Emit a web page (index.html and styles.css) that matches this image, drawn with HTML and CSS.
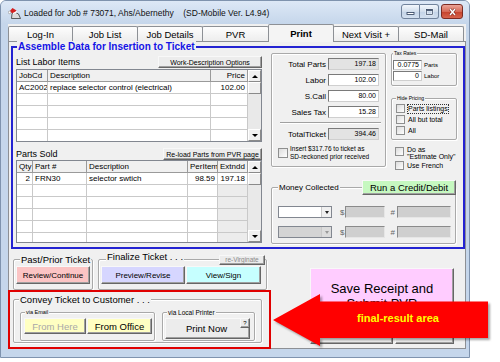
FILE: index.html
```html
<!DOCTYPE html>
<html lang="en">
<head>
<meta charset="utf-8">
<title>SD-Mobile Print</title>
<link rel="stylesheet" href="styles.css">
</head>
<body>
<div class="window">
  <div class="titlebar">
    <svg class="app-icon" viewBox="0 0 13 12" aria-hidden="true">
      <path d="M4 6.5 Q7.5 4 10.5 7 L12.5 11.5 L3.5 11.5 Z" fill="#dcdcdc" stroke="#3a3a3a" stroke-width="0.8"/>
      <path d="M1 5 L4.5 1 L8.5 3.5 L6 6.5 Z" fill="#d42020"/>
      <circle cx="1.6" cy="5.4" r="1.3" fill="#fff" stroke="#777" stroke-width="0.5"/>
      <path d="M5 6.6 L9 4.6" stroke="#fff" stroke-width="1.2"/>
    </svg>
    <span class="title">Loaded for Job # 73071, Ahs/Abernethy    (SD-Mobile Ver. L4.94)</span>
    <div class="wctrls">
      <span class="wbtn wmin"><svg viewBox="0 0 9 8"><rect x="1" y="4.5" width="7" height="2" fill="#fff" stroke="#2c3e5a" stroke-width="0.8"/></svg></span>
      <span class="wbtn wmax"><svg viewBox="0 0 9 8"><rect x="1.5" y="1.5" width="6" height="5" fill="none" stroke="#fff" stroke-width="1.6"/><rect x="1.5" y="1.5" width="6" height="5" fill="none" stroke="#2c3e5a" stroke-width="0.7"/><rect x="1.5" y="1.5" width="6" height="1.3" fill="#2c3e5a"/></svg></span>
      <span class="wbtn wclose"><svg viewBox="0 0 9 8"><path d="M2 1 L7 7 M7 1 L2 7" stroke="#6a1d14" stroke-width="2.6"/><path d="M2 1 L7 7 M7 1 L2 7" stroke="#fff" stroke-width="1.5"/></svg></span>
    </div>
  </div>

  <div class="client">
    <div class="tabs">
      <div class="tab t65">Log-In</div>
      <div class="tab">Job List</div>
      <div class="tab">Job Details</div>
      <div class="tab t67">PVR</div>
      <div class="tab sel">Print</div>
      <div class="tab">Next Visit +</div>
      <div class="tab">SD-Mail</div>
    </div>

    <div class="page">
      <div class="assemble">
        <div class="assemble-title">Assemble Data for Insertion to Ticket</div>
        <div class="assemble-body">
          <div class="left-col">
            <div class="sec-head labor-head">
              <span class="sec-label">List Labor Items</span>
              <button class="btn grey opt-btn">Work-Description Options</button>
            </div>
            <div class="grid labor">
              <div class="cells labor-cols">
                <div class="hd">JobCd</div><div class="hd">Description</div><div class="hd r">Price</div>
                <div>AC2002</div><div>replace selector control (electrical)</div><div class="r">102.00</div>
                <div></div><div></div><div></div>
                <div></div><div></div><div></div>
                <div></div><div></div><div></div>
                <div></div><div></div><div></div>
              </div>
              <div class="vscroll">
                <div class="sbtn up"></div>
                <div class="sbtn thumb"></div>
                <div class="track"></div>
                <div class="sbtn down"></div>
              </div>
            </div>

            <div class="sec-head parts-head">
              <span class="sec-label">Parts Sold</span>
              <button class="btn grey reload-btn">Re-load Parts from PVR page</button>
            </div>
            <div class="grid parts">
              <div class="cells parts-cols">
                <div class="hd">Qty</div><div class="hd">Part #</div><div class="hd">Description</div><div class="hd">PerItem</div><div class="hd">Extndd</div>
                <div class="r">2</div><div>FRN30</div><div>selector swtich</div><div class="r">98.59</div><div class="r">197.18</div>
                <div></div><div></div><div></div><div></div><div class="g"></div>
                <div></div><div></div><div></div><div></div><div class="g"></div>
                <div></div><div></div><div></div><div></div><div class="g"></div>
                <div></div><div></div><div></div><div></div><div class="g"></div>
                <div></div><div></div><div></div><div></div><div class="g"></div>
              </div>
              <div class="vscroll">
                <div class="sbtn up"></div>
                <div class="sbtn thumb"></div>
                <div class="track"></div>
                <div class="sbtn down"></div>
              </div>
            </div>
          </div>

          <div class="right-area">
            <div class="right-top">
              <div class="gbox totals">
                <div class="trow"><span class="tlabel">Total Parts</span><span class="tbox dis">197.18</span></div>
                <div class="trow"><span class="tlabel">Labor</span><span class="tbox">102.00</span></div>
                <div class="trow"><span class="tlabel">S.Call</span><span class="tbox">80.00</span></div>
                <div class="trow"><span class="tlabel">Sales Tax</span><span class="tbox">15.28</span></div>
                <div class="sep"></div>
                <div class="trow"><span class="tlabel">TotalTicket</span><span class="tbox dis">394.46</span></div>
                <div class="insert-row">
                  <span class="chk big"></span>
                  <span class="insert-lbl">Insert $317.76 to ticket as<br>SD-reckoned prior received</span>
                </div>
              </div>

              <div class="side">
                <div class="gbox taxbox">
                  <span class="gtitle tiny">Tax Rates</span>
                  <div class="taxrows">
                    <div class="taxrow"><span class="taxin">0.0775</span><span class="taxlbl">Parts</span></div>
                    <div class="taxrow"><span class="taxin">0</span><span class="taxlbl">Labor</span></div>
                  </div>
                </div>
                <div class="gbox hidebox">
                  <span class="gtitle tiny">Hide Pricing</span>
                  <div class="chkrow"><span class="chk"></span><span class="chklbl focus">Parts listings</span></div>
                  <div class="chkrow"><span class="chk"></span><span class="chklbl">All but total</span></div>
                  <div class="chkrow"><span class="chk"></span><span class="chklbl">All</span></div>
                </div>
                <div class="estrow"><span class="chk"></span><span class="chklbl two">Do as<br>"Estimate Only"</span></div>
                <div class="chkrow frrow"><span class="chk"></span><span class="chklbl">Use French</span></div>
              </div>
            </div>

            <div class="gbox money">
              <div class="ghead">
                <span class="gtitle money-title">Money Collected</span>
                <span class="spacer"></span>
                <button class="btn green">Run a Credit/Debit</button>
              </div>
              <div class="mrow first">
                <span class="combo"><span class="dd"></span></span>
                <span class="cur dollar">$</span><span class="minput m40"></span>
                <span class="cur hash">#</span><span class="minput m54"></span>
              </div>
              <div class="mrow second">
                <span class="combo dis"><span class="dd"></span></span>
                <span class="cur dollar">$</span><span class="minput m40"></span>
                <span class="cur hash">#</span><span class="minput m54"></span>
              </div>
            </div>
          </div>
        </div>
      </div>

      <div class="lower">
        <div class="lower-left">
          <div class="lower-row">
            <div class="gbox past">
              <span class="gtitle mid">Past/Prior Ticket</span>
              <button class="btn pink review">Review/Continue</button>
            </div>
            <div class="gbox finalize">
              <div class="ghead fin-head">
                <span class="gtitle mid fin-title">Finalize Ticket . . .</span>
                <span class="spacer"></span>
                <button class="btn grey revirg">re-Virginate</button>
              </div>
              <div class="fin-btns">
                <button class="btn lav preview">Preview/Revise</button>
                <button class="btn cyan viewsign">View/Sign</button>
              </div>
            </div>
          </div>
          <div class="gbox convey">
            <span class="gtitle mid">Convey Ticket to Customer . . .</span>
            <div class="convey-row">
              <div class="gbox via email">
                <span class="gtitle via-title">via Email</span>
                <div class="email-btns">
                  <button class="btn yellow here">From Here</button>
                  <button class="btn yellow office">From Office</button>
                </div>
              </div>
              <div class="gbox via printer">
                <span class="gtitle via-title lp">via Local Printer</span>
                <div class="print-wrap">
                  <button class="btn grey printnow">Print Now</button>
                  <button class="btn grey qmark">?</button>
                </div>
              </div>
            </div>
          </div>
        </div>
        <div class="lower-right">
          <button class="btn save">Save Receipt and<br>Submit PVR</button>
          <div class="save-row">
            <button class="btn grey sub1"></button>
            <button class="btn grey sub2"></button>
          </div>
        </div>
      </div>
    </div>
  </div>

  <div class="red-frame"></div>
  <svg class="arrow" viewBox="270 291 222 60" aria-hidden="false">
    <polygon class="arrow-shape" points="273,320 320,294 320,301.5 488,301.5 488,338 320,338 320,346" fill="#ff0000"/>
    <text x="398" y="322" text-anchor="middle" class="arrow-text">final-result area</text>
  </svg>
</div>
</body>
</html>
```

FILE: styles.css
```css
* { box-sizing: border-box; }
html, body { margin: 0; padding: 0; background: #fff; }
body { font-family: "Liberation Sans", Arial, sans-serif; color: #000; width: 500px; height: 362px; overflow: hidden; }
button { font-family: inherit; margin: 0; padding: 0; color: #000; }

/* window frame */
.window { position: relative; width: 470px; height: 358px; border: 1px solid #7f93ae; border-radius: 6px 6px 0 0; background: #c5d6eb; display: flex; flex-direction: column; }
.titlebar { height: 23px; flex: none; display: flex; align-items: center; padding-left: 7px; background: linear-gradient(#dde8f6, #c5d6eb); border-radius: 5px 5px 0 0; }
.app-icon { width: 13px; height: 12px; flex: none; }
.title { margin-left: 3px; font-size: 8.5px; white-space: pre; color: #111; }
.wctrls { margin-left: auto; margin-right: 6px; align-self: flex-start; margin-top: 3px; display: flex; }
.wbtn { height: 15px; width: 19px; border: 1px solid #71839c; background: linear-gradient(#f3f7fc, #d2deec 50%, #c3d3e7 51%, #d3e0ef); display: flex; align-items: center; justify-content: center; }
.wbtn svg { width: 9px; height: 8px; }
.wmin { border-radius: 3px 0 0 3px; }
.wmax { border-left: none; border-radius: 0 3px 3px 0; }
.wclose { width: 22px; margin-left: 2px; border-color: #7d2b22; border-radius: 3px; background: linear-gradient(#eba497, #d66a57 50%, #c4412b 51%, #d7634c); }

/* client + tabs */
.client { flex: 1; margin: 0 3px 8px 7px; background: #f0f0f0; display: flex; flex-direction: column; }
.tabs { height: 17px; flex: none; display: flex; align-items: flex-end; position: relative; z-index: 1; }
.tab { width: 66px; height: 15px; flex: none; border: 1px solid #8d9095; border-bottom: none; margin-right: -1px; background: linear-gradient(#fdfdfd, #ededed); font-size: 9.5px; display: flex; align-items: center; justify-content: center; border-radius: 2px 2px 0 0; }
.tab.t65 { width: 65px; }
.tab.t67 { width: 67px; }
.tab.sel { height: 18px; margin-bottom: -1px; background: #f4f4f4; font-weight: bold; }
.page { flex: 1; border: 1px solid #8d9095; background: #f0f0f0; display: flex; flex-direction: column; }

/* big blue group */
.assemble { margin: 4px 0 0 2px; width: 454px; height: 203px; flex: none; border: 2px solid #2323d2; }
.assemble-title { width: fit-content; margin: -7px 0 -5px 4px; padding: 0 1px; background: #f0f0f0; color: #1414e6; font-weight: bold; font-size: 10px; line-height: 12px; }
.assemble-body { display: flex; padding-left: 3px; gap: 9px; }

.left-col { width: 246px; flex: none; display: flex; flex-direction: column; }
.sec-head { height: 12px; display: flex; justify-content: space-between; align-items: center; }
.labor-head { margin-top: 8px; }
.parts-head { margin-top: 6px; }
.sec-label { font-size: 9px; }
.opt-btn { width: 104px; height: 12px; font-size: 7px; }
.reload-btn { width: 99px; height: 12px; font-size: 7px; }

.grid { display: flex; border: 1px solid #828790; background: #fff; overflow: hidden; }
.labor { margin-top: 1px; height: 73px; }
.parts { height: 83px; }
.cells { flex: 1; display: grid; grid-auto-rows: 12px; align-content: start; overflow: hidden; }
.labor-cols { grid-template-columns: 31px 163px 37px; }
.parts-cols { grid-template-columns: 16px 54px 101px 30px 30px; }
.cells > div { font-size: 8px; line-height: 11px; padding: 0 2px; border-right: 1px solid #c9c9c9; border-bottom: 1px solid #c9c9c9; white-space: nowrap; overflow: hidden; }
.cells > .hd { background: #f0f0f0; border-right-color: #9a9a9a; border-bottom-color: #9a9a9a; }
.cells > .r { text-align: right; }
.cells > .g { background: #ececec; }
.vscroll { width: 13px; flex: none; display: flex; flex-direction: column; background: #e9e9e9; }
.sbtn { height: 12px; flex: none; background: #f0f0f0; border: 1px solid; border-color: #fff #8a8a8a #8a8a8a #fff; display: flex; align-items: center; justify-content: center; }
.up::before { content: ""; border-left: 3px solid transparent; border-right: 3px solid transparent; border-bottom: 3px solid #000; }
.down::before { content: ""; border-left: 3px solid transparent; border-right: 3px solid transparent; border-top: 3px solid #000; }
.track { flex: 1; }

/* generic group boxes */
.gbox { border: 1px solid #a9a9a9; box-shadow: inset 1px 1px #fff, 1px 1px #fff; border-radius: 2px; }
.gtitle { display: block; width: fit-content; padding: 0 1px; background: #f0f0f0; white-space: nowrap; }
.gtitle.tiny { font-size: 5px; line-height: 9px; margin-top: -5px; }
.gtitle.mid { font-size: 9.5px; line-height: 11px; margin-top: -6px; margin-left: 5px; }
.ghead { display: flex; align-items: center; }
.spacer { flex: 1; }

/* buttons */
.btn { border: 1px solid; border-color: #f8f8f8 #666 #666 #f8f8f8; box-shadow: inset -1px -1px #a0a0a0; background: #ececec; display: flex; align-items: center; justify-content: center; white-space: nowrap; }
.btn.pink { background: #fbc4c4; }
.btn.lav { background: #d6d6ff; }
.btn.cyan { background: #c6ffff; }
.btn.yellow { background: #ffffc2; }
.btn.green { background: #c6f8c0; }

/* totals */
.right-area { width: 186px; flex: none; }
.right-top { display: flex; align-items: flex-start; height: 124px; }
.totals { width: 115px; height: 114px; flex: none; margin-top: 5px; padding: 4px 6px 0 0; }
.trow { display: flex; justify-content: flex-end; align-items: center; height: 12px; margin-bottom: 4px; }
.tlabel { font-size: 8px; margin-right: 2px; }
.tbox { width: 51px; height: 12px; border: 1px solid #7a7a7a; border-right-color: #cfcfcf; border-bottom-color: #cfcfcf; background: #fff; font-size: 7px; line-height: 10px; text-align: right; padding-right: 2px; }
.tbox.dis { background: #e3e3e3; }
.sep { height: 2px; border-top: 1px solid #a0a0a0; border-bottom: 1px solid #fff; margin: 0 -2px 4px 8px; }
.insert-row { display: flex; align-items: center; height: 16px; margin-top: 5px; padding-left: 6px; }
.insert-lbl { font-size: 6.5px; line-height: 8px; margin-left: 2px; white-space: nowrap; }

/* side column */
.side { width: 66px; flex: none; margin-left: 5px; }
.taxbox { margin-top: 5px; padding: 0 0 4px 1px; }
.taxrows { margin-top: 2px; display: flex; flex-direction: column; gap: 1px; }
.taxrow { display: flex; align-items: center; height: 10px; }
.taxin { width: 29px; height: 10px; border: 1px solid #7a7a7a; border-right-color: #cfcfcf; border-bottom-color: #cfcfcf; background: #fff; font-size: 7px; line-height: 8px; text-align: right; padding-right: 2px; }
.taxlbl { font-size: 6px; margin-left: 2px; }
.hidebox { margin-top: 12px; padding: 0 0 3px 4px; }
.chkrow { display: flex; align-items: center; height: 11px; }
.chk { width: 9px; height: 9px; flex: none; border: 1px solid #8e8f8f; background: linear-gradient(135deg, #dcdcdc, #fff); }
.chk.big { width: 10px; height: 10px; }
.chklbl { font-size: 7px; line-height: 8px; margin-left: 3px; white-space: nowrap; }
.chklbl.two { line-height: 7px; }
.focus { outline: 1px dotted #333; }
.estrow { display: flex; align-items: flex-start; margin-top: 6px; padding-left: 4px; }
.estrow .chk { margin-top: 1px; }
.frrow { margin-top: 1px; padding-left: 4px; height: 9px; }

/* money collected */
.money { width: 185px; margin-top: 15px; padding: 0 0 5px 6px; }
.money .ghead { height: 15px; margin: -8px -1px 0 0; }
.money-title { font-size: 8px; line-height: 10px; }
.green { width: 94px; height: 15px; font-size: 9.5px; }
.mrow { display: flex; align-items: center; height: 12px; }
.mrow.first { margin-top: 11px; }
.mrow.second { margin-top: 8px; }
.combo { width: 54px; height: 12px; border: 1px solid #828790; background: #fff; display: flex; justify-content: flex-end; }
.combo.dis { background: #d4d4d4; }
.dd { width: 10px; height: 10px; background: #f0f0f0; border-left: 1px solid #c8c8c8; display: flex; align-items: center; justify-content: center; }
.combo.dis .dd { background: #dcdcdc; }
.dd::before { content: ""; border-left: 2.5px solid transparent; border-right: 2.5px solid transparent; border-top: 3px solid #222; }
.combo.dis .dd::before { border-top-color: #999; }
.cur { font-size: 8px; color: #666; }
.dollar { margin-left: 8px; }
.hash { margin-left: 5px; }
.minput { height: 12px; background: #cfcfcf; border: 1px solid #8a8a8a; border-right-color: #e6e6e6; border-bottom-color: #e6e6e6; }
.m40 { width: 40px; margin-left: 1px; }
.m54 { width: 54px; margin-left: 2px; }

/* lower section */
.lower { display: flex; }
.lower-left { width: 253px; flex: none; margin-left: 4px; }
.lower-row { display: flex; margin-top: 10px; }
.past { width: 80px; flex: none; padding: 0 0 5px 2px; }
.past .gtitle { margin-left: 4px; }
.review { width: 74px; height: 18px; margin-top: 1px; font-size: 8px; }
.finalize { width: 169px; flex: none; margin-left: 5px; padding: 0 0 5px 2px; }
.fin-head { height: 11px; margin: -6px 1px 0 0; }
.fin-title { margin-top: 0; margin-left: 10px; }
.revirg { width: 46px; height: 10px; font-size: 6.5px; color: #8a8a8a; }
.fin-btns { display: flex; gap: 1px; margin-top: 1px; }
.preview { width: 84px; height: 18px; font-size: 8px; }
.viewsign { width: 75px; height: 18px; font-size: 8px; }

.convey { width: 249px; margin-top: 9px; padding: 0 0 1px 0; }
.convey-row { display: flex; align-items: flex-start; margin-top: 7px; }
.via { height: 29px; flex: none; }
.email { width: 135px; margin-left: 6px; padding: 0 0 0 3px; }
.printer { width: 93px; margin-left: 7px; padding: 0 0 0 2px; }
.via-title { font-size: 5.5px; line-height: 7px; margin-top: -4px; margin-left: 1px; }
.via-title.lp { font-size: 6.5px; margin-left: 2px; }
.email-btns { display: flex; gap: 1px; margin-top: 2px; }
.here { width: 62px; height: 16px; font-size: 9.5px; color: #a8a8a8; }
.office { width: 65px; height: 16px; font-size: 9.5px; }
.print-wrap { position: relative; width: 85px; margin-top: 2px; }
.printnow { width: 85px; height: 21px; font-size: 9.5px; padding-right: 2px; }
.qmark { position: absolute; top: 0; right: 0; width: 10px; height: 10px; font-size: 6px; }

.lower-right { width: 144px; flex: none; margin-left: 44px; }
.save { width: 144px; height: 60px; margin-top: 19px; background: #ffccff; font-size: 13px; line-height: 15px; white-space: normal; text-align: center; padding-bottom: 5px; }
.save-row { display: flex; gap: 2px; margin-top: 3px; }
.sub1 { width: 83px; height: 13px; }
.sub2 { width: 59px; height: 13px; }

/* annotation overlays */
.red-frame { position: absolute; left: 7px; top: 289px; width: 263px; height: 59px; border: 2px solid #e00000; pointer-events: none; }
.arrow { position: absolute; left: 269px; top: 290px; width: 222px; height: 60px; overflow: visible; }
.arrow-shape { filter: drop-shadow(2px 2px 1px rgba(0, 0, 0, 0.35)); }
.arrow-text { font-family: "Liberation Sans", Arial, sans-serif; font-weight: bold; font-size: 11px; fill: #ffff00; }
```
